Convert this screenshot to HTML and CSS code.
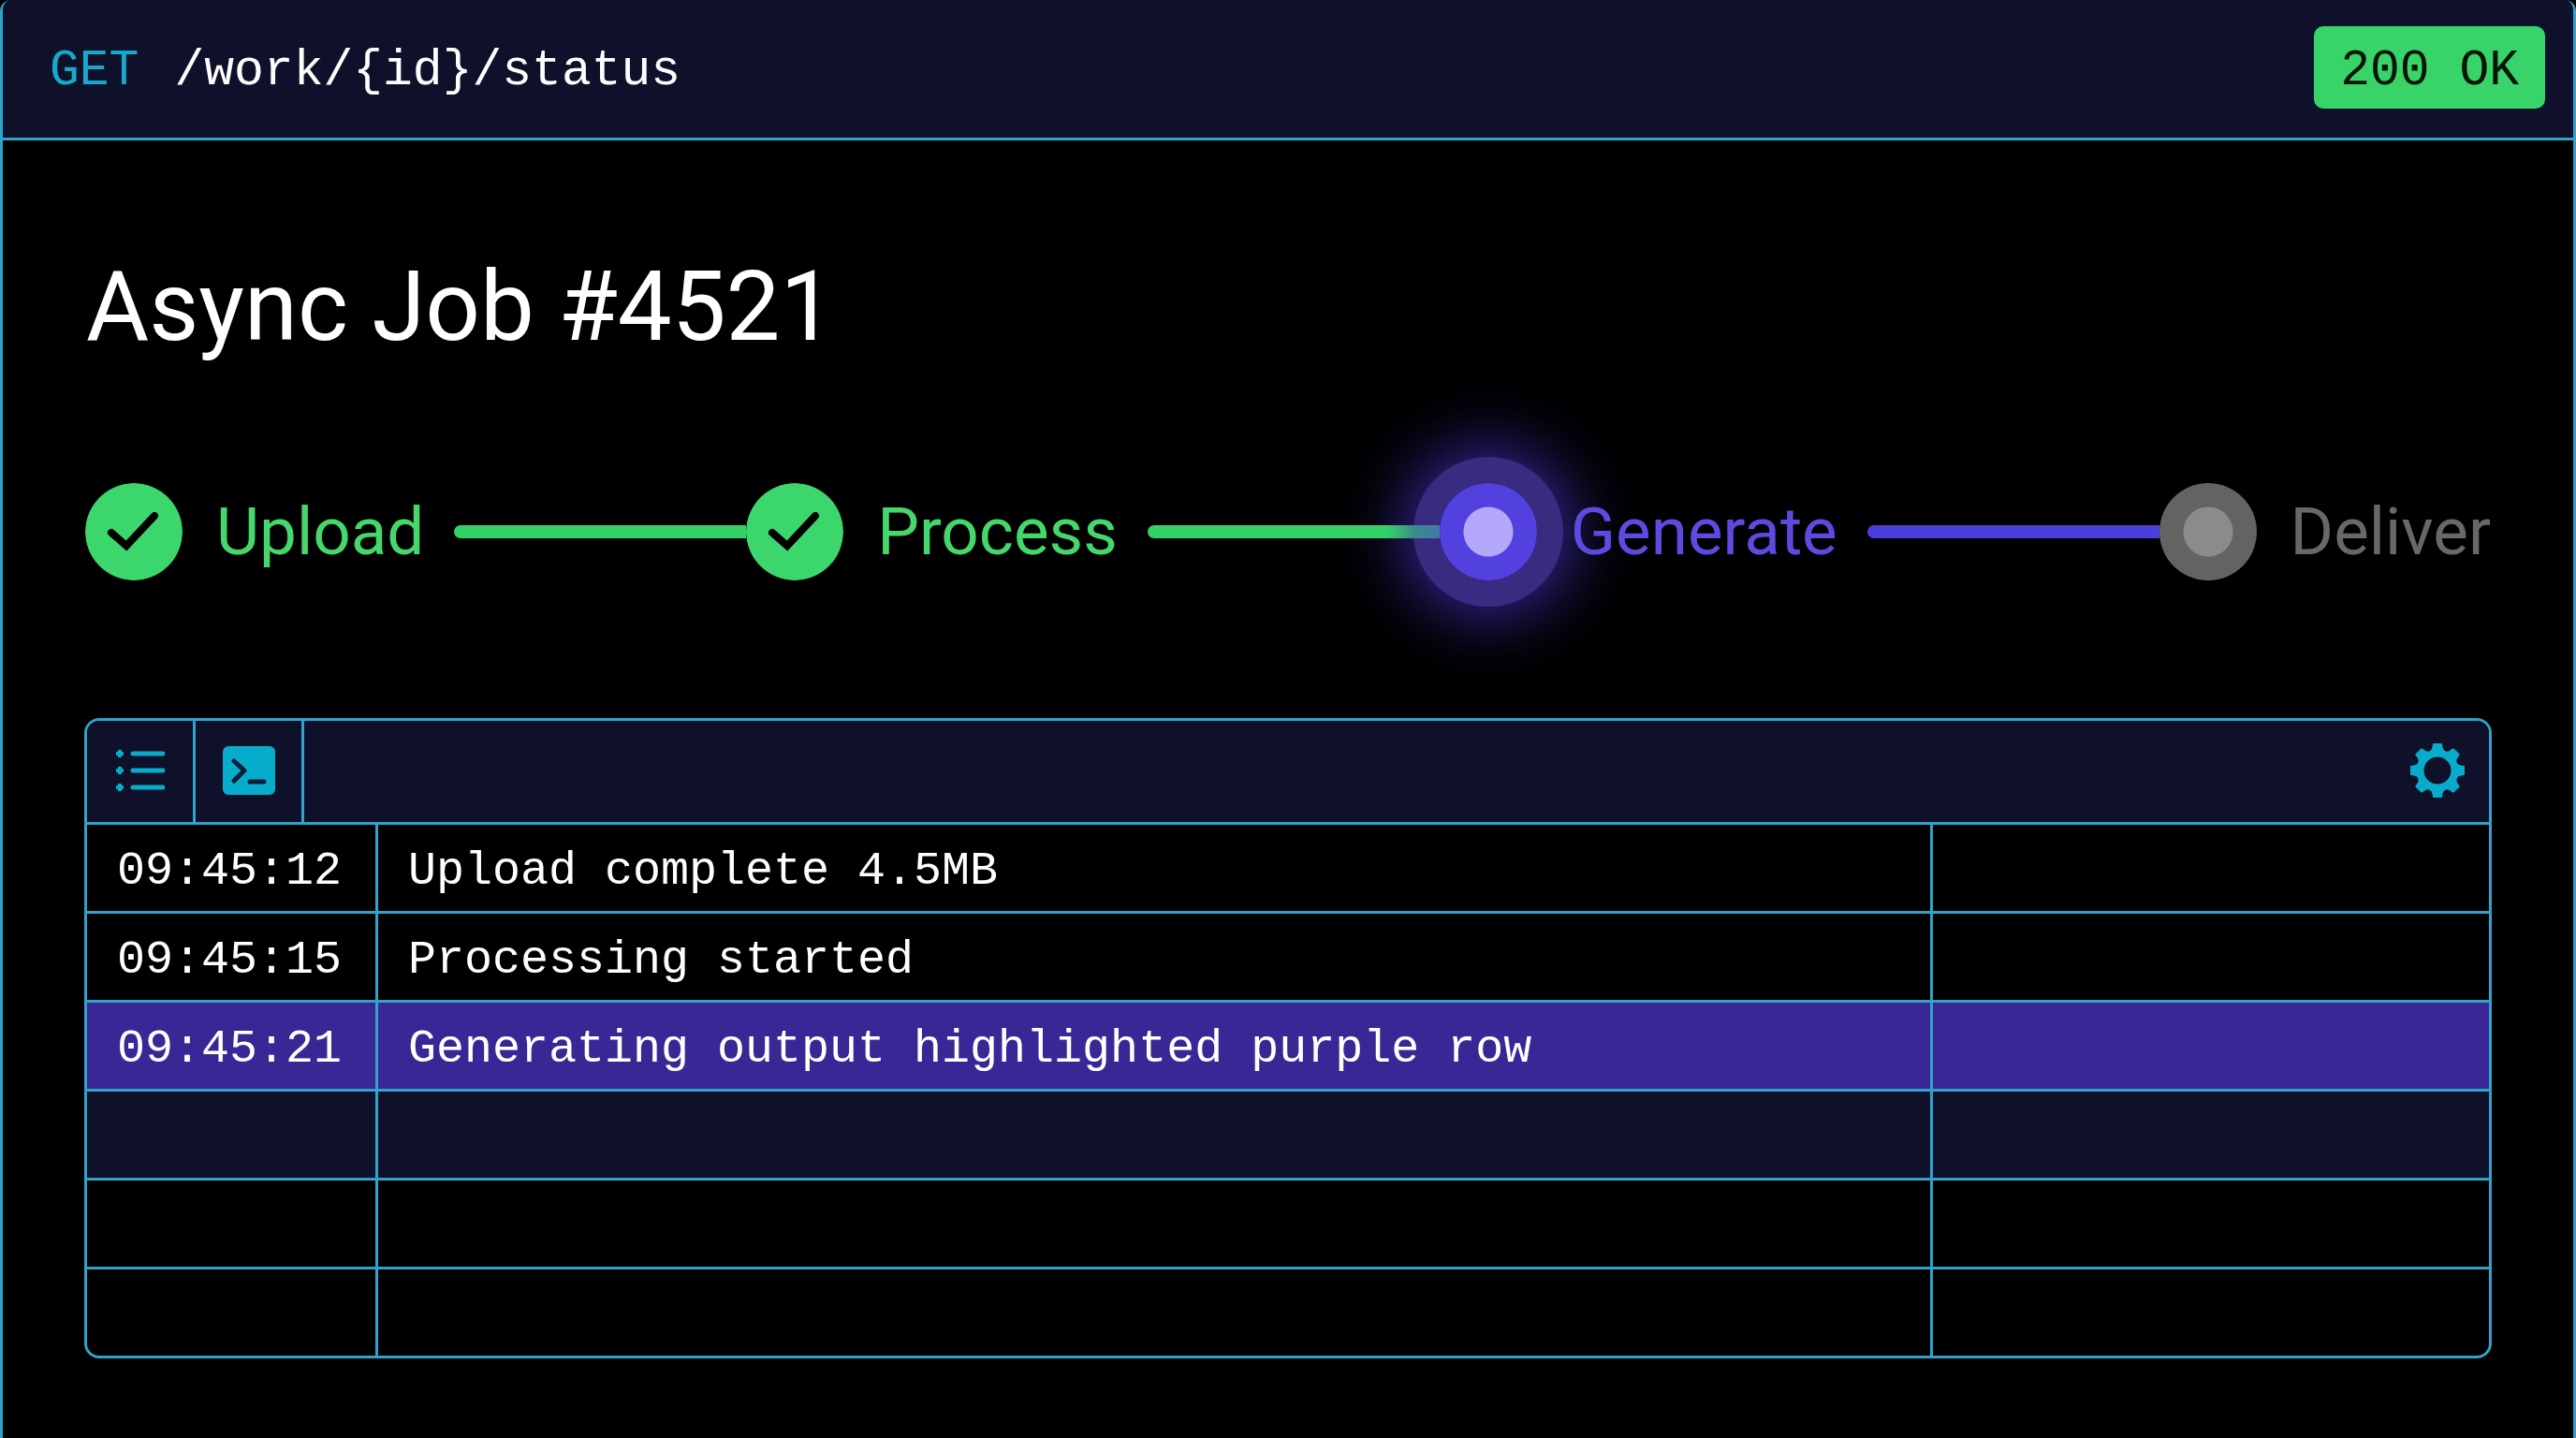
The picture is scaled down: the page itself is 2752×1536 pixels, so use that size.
FILE: index.html
```html
<!DOCTYPE html>
<html lang="en">
<head>
  <meta charset="UTF-8" />
  <meta name="viewport" content="width=device-width, initial-scale=1.0" />
  <title>Async Job #4521</title>
  <link rel="stylesheet" href="styles.css">
</head>
<body>
  <div class="frame">
    <!-- Request bar -->
    <header class="request-bar">
      <div class="request">
        <span class="method">GET</span>
        <span>/work/{id}/status</span>
      </div>
      <div class="status-badge">200 OK</div>
    </header>

    <main class="content">
      <h1 class="title">Async Job #4521</h1>

      <!-- Job progress -->
      <div class="stepper">
        <div class="step done">
          <svg class="dot" viewBox="0 0 104 104">
            <circle cx="52" cy="52" r="52" />
            <path class="check" d="M28 53 L44 67 L74 35" />
          </svg>
          <span class="label">Upload</span>
        </div>
        <div class="line green"></div>
        <div class="step done">
          <svg class="dot" viewBox="0 0 104 104">
            <circle cx="52" cy="52" r="52" />
            <path class="check" d="M28 53 L44 67 L74 35" />
          </svg>
          <span class="label">Process</span>
        </div>
        <div class="line fade"></div>
        <div class="step active">
          <div class="dot"></div>
          <span class="label">Generate</span>
        </div>
        <div class="line purple"></div>
        <div class="step pending">
          <div class="dot"></div>
          <span class="label">Deliver</span>
        </div>
      </div>

      <!-- Log panel -->
      <section class="log-panel">
        <div class="toolbar">
          <button class="tab" aria-label="List">
            <svg width="52" height="46" viewBox="0 0 52 46">
              <path class="bullets" d="M4 1v8M0 5h8M4 19v8M0 23h8M4 37v8M0 41h8" />
              <path class="bars" d="M18 5h32M18 23h32M18 41h32" />
            </svg>
          </button>
          <button class="tab" aria-label="Console">
            <svg width="56" height="52" viewBox="0 0 56 52">
              <rect class="console-box" width="56" height="52" rx="6" />
              <path class="prompt" d="M12 16l11 10l-11 11M29 38h15" />
            </svg>
          </button>
          <button class="settings" aria-label="Settings">
            <svg width="58" height="58" viewBox="-29 -29 58 58">
              <defs>
                <path id="tooth" d="M-7 -20 L-5 -23 L-4 -28 H4 L5 -23 L7 -20 Z" />
              </defs>
              <circle class="gear-ring" r="18.5" />
              <g class="gear-teeth">
                <use href="#tooth" />
                <use href="#tooth" transform="rotate(45)" />
                <use href="#tooth" transform="rotate(90)" />
                <use href="#tooth" transform="rotate(135)" />
                <use href="#tooth" transform="rotate(180)" />
                <use href="#tooth" transform="rotate(225)" />
                <use href="#tooth" transform="rotate(270)" />
                <use href="#tooth" transform="rotate(315)" />
              </g>
            </svg>
          </button>
        </div>

        <table class="log">
          <colgroup>
            <col class="col-time">
            <col>
            <col class="col-extra">
          </colgroup>
          <tbody>
            <tr><td>09:45:12</td><td>Upload complete 4.5MB</td><td></td></tr>
            <tr><td>09:45:15</td><td>Processing started</td><td></td></tr>
            <tr class="highlight"><td>09:45:21</td><td>Generating output highlighted purple row</td><td></td></tr>
            <tr class="tinted"><td></td><td></td><td></td></tr>
            <tr><td></td><td></td><td></td></tr>
            <tr><td></td><td></td><td></td></tr>
          </tbody>
        </table>
      </section>
    </main>
  </div>
</body>
</html>
```
FILE: styles.css
```css
:root {
  --border: #2fa3c9;
  --cyan: #08accb;
  --green: #38d46a;
  --purple: #5240df;
  --navy: #0f112a;
  --mono: "Liberation Mono", monospace;
}

* {
  box-sizing: border-box;
}

body {
  margin: 0;
  background: #000;
  color: #fff;
  font-family: Roboto, sans-serif;
}

.frame {
  min-height: 100vh;
  border-left: 3px solid var(--border);
  border-right: 3px solid var(--border);
  border-radius: 12px 12px 0 0;
}

.request-bar {
  display: flex;
  align-items: center;
  justify-content: space-between;
  height: 150px;
  padding: 0 30px 4px 50px;
  background: var(--navy);
  border-bottom: 3px solid var(--border);
  border-radius: 10px 10px 0 0;
  font-family: var(--mono);
  font-size: 53px;
}

.request {
  display: flex;
  gap: 38px;
  padding-top: 8px;
}

.method {
  color: #17a9cb;
}

.status-badge {
  padding: 8px 28px 0;
  line-height: 80px;
  background: var(--green);
  color: #001505;
  border-radius: 10px;
}

.content {
  padding: 118px 87px 82px;
}

.title {
  margin: 0 0 128px;
  padding-left: 2px;
  font-size: 103px;
  font-weight: 400;
  line-height: 120px;
}

/* progress */
.stepper {
  display: flex;
  align-items: center;
  padding: 0 1px;
  margin-bottom: 147px;
}

.step {
  display: flex;
  align-items: center;
}

.dot {
  display: block;
  width: 104px;
  height: 104px;
  border-radius: 50%;
}

.label {
  padding: 0 32px 0 36px;
  font-size: 71px;
  line-height: 104px;
}

.step:last-child .label {
  padding-right: 0;
}

.done .label {
  color: #45d76c;
}

.done circle {
  fill: #3bd66c;
}

.check {
  fill: none;
  stroke: #000;
  stroke-width: 8;
  stroke-linecap: round;
}

.active .dot {
  background: radial-gradient(circle, #b3a8f9 26px, var(--purple) 27px);
  box-shadow: 0 0 0 28px #382b80, 0 0 70px 38px rgba(80, 58, 225, 0.7);
}

.active .label {
  position: relative;
  color: #5d4be0;
}

.pending .dot {
  background: radial-gradient(circle, #8b8b8b 26px, #636363 27px);
}

.pending .label {
  color: #686868;
}

.line {
  position: relative;
  z-index: 1;
  flex: 1;
  height: 14px;
  border-radius: 7px 0 0 7px;
}

.line.green {
  background: #35d067;
}

.line.fade {
  background: linear-gradient(to right, #35d067 82%, #3b8a8c 92%, #4478b0);
}

.line.purple {
  background: #4c3edb;
}

/* log */
.log-panel {
  border: 3px solid var(--border);
  border-radius: 16px;
  overflow: hidden;
}

.toolbar {
  display: flex;
  height: 111px;
  background: var(--navy);
  border-bottom: 3px solid var(--border);
}

.toolbar button {
  display: flex;
  align-items: center;
  justify-content: center;
  padding: 0 0 2px;
  background: none;
  border: none;
  cursor: pointer;
}

.toolbar .tab {
  width: 116px;
  border-right: 3px solid var(--border);
}

.toolbar .settings {
  margin-left: auto;
  padding: 0 26px 2px;
}

.bullets,
.bars,
.prompt {
  fill: none;
  stroke: var(--cyan);
  stroke-width: 5;
  stroke-linecap: round;
  stroke-linejoin: round;
}

.bullets {
  stroke-width: 4;
  stroke-linecap: butt;
}

.console-box {
  fill: var(--cyan);
}

.prompt {
  stroke: #06203a;
}

.gear-ring {
  fill: none;
  stroke: var(--cyan);
  stroke-width: 8;
}

.gear-teeth {
  fill: var(--cyan);
  stroke: var(--cyan);
  stroke-width: 2;
  stroke-linejoin: round;
}

.log {
  width: 100%;
  table-layout: fixed;
  border-collapse: separate;
  border-spacing: 0;
  font-family: var(--mono);
  font-size: 50px;
}

.col-time {
  width: 311px;
}

.col-extra {
  width: 594px;
}

.log td {
  height: 95px;
  padding: 8px 32px 0;
  line-height: 60px;
  white-space: nowrap;
  border-right: 3px solid var(--border);
  border-bottom: 3px solid var(--border);
}

.log td:last-child {
  border-right: none;
}

.log tr:last-child td {
  height: 92px;
  border-bottom: none;
}

.highlight {
  background: #3a2795;
}

.tinted {
  background: #0e1129;
}
```
